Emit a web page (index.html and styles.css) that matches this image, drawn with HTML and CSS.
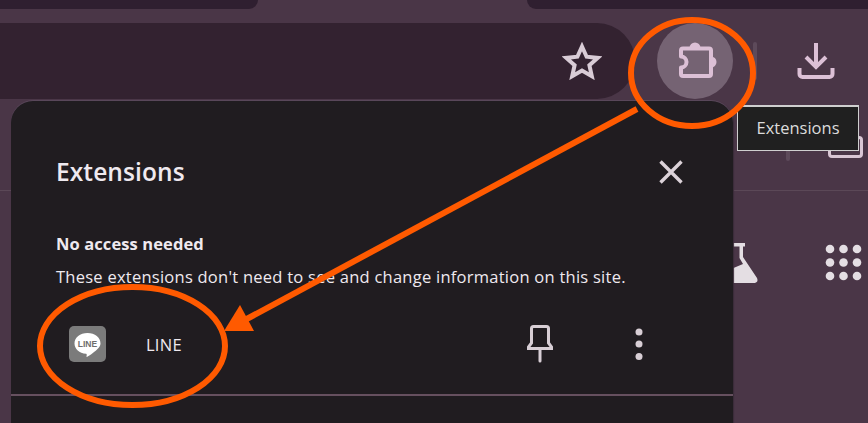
FILE: index.html
```html
<!DOCTYPE html>
<html lang="en">
<head>
<meta charset="utf-8">
<title>Extensions</title>
<link rel="stylesheet" href="styles.css">
</head>
<body>
<div class="browser">
  <div class="tabstrip">
    <div class="tab tab-left"></div>
    <div class="tab tab-right"></div>
  </div>
  <div class="toolbar">
    <div class="omnibox">
      <svg class="star" width="40" height="38" viewBox="0 0 40 38"><path d="M20 4.500l4.600 10.200 11.100 1.200-8.300 7.400 2.400 10.900L20 28.600l-9.800 5.600 2.400-10.900-8.300-7.400 11.100-1.200z" fill="none" stroke="#d9ccd6" stroke-width="4" stroke-linejoin="miter"/></svg>
    </div>
    <div class="ext-btn">
      <svg class="puzzle" width="44" height="42" viewBox="0 0 44 42">
        <path d="M10 8.500H36a2 2 0 0 1 2 2V34a2 2 0 0 1-2 2H10a2 2 0 0 1-2-2V27.500a5.500 5.500 0 0 0 0-11V10.500a2 2 0 0 1 2-2z" fill="none" stroke="#dcc0d6" stroke-width="4" stroke-linejoin="round"/>
        <path d="M16.500 8a5.500 5.500 0 0 1 11 0z" fill="#dcc0d6"/>
        <path d="M38 16.500a5.500 5.500 0 0 1 0 11z" fill="#dcc0d6"/>
      </svg>
    </div>
    <div class="sep"></div>
    <svg class="download" width="40" height="38" viewBox="0 0 40 38"><path d="M20 1v24M10 15l10 10 10-10M3.500 26v6a3 3 0 0 0 3 3h27a3 3 0 0 0 3-3v-6" fill="none" stroke="#dcc0d6" stroke-width="4" stroke-linejoin="miter"/></svg>
  </div>
  <div class="bookmarks">
    <div class="sep sep-low"></div>
    <div class="window-icon"></div>
  </div>
  <div class="content-row">
    <svg class="flask" width="50" height="42" viewBox="0 0 50 42"><path d="M13 0H35V3.500H33V14L47 35Q49 40 43 40H5Z" fill="#e4dee3"/><path d="M14 3.500H29.500V15L33 21L14 29Z" fill="#4a3647"/></svg>
    <svg class="grid" width="38" height="38" viewBox="0 0 38 38" fill="#e4dee3"><circle cx="5" cy="5" r="4.300"/><circle cx="18.500" cy="5" r="4.300"/><circle cx="32" cy="5" r="4.300"/><circle cx="5" cy="18.500" r="4.300"/><circle cx="18.500" cy="18.500" r="4.300"/><circle cx="32" cy="18.500" r="4.300"/><circle cx="5" cy="32" r="4.300"/><circle cx="18.500" cy="32" r="4.300"/><circle cx="32" cy="32" r="4.300"/></svg>
  </div>
</div>

<div class="panel">
  <div class="panel-head">
    <h1 class="panel-title">Extensions</h1>
    <svg class="close" width="24" height="24" viewBox="0 0 24 24"><path d="M1.500 1.500l21 21M22.500 1.500l-21 21" stroke="#dcd2d9" stroke-width="3.400" fill="none"/></svg>
  </div>
  <h2 class="section-title">No access needed</h2>
  <p class="section-text">These extensions don't need to see and change information on this site.</p>
  <div class="ext-row">
    <div class="line-logo">
      <svg width="37" height="36" viewBox="0 0 37 36"><path d="M18.500 7C11 7 5.500 11.500 5.500 17.500c0 5.500 4.800 9.700 11.500 10.300.6.100.8.500.7 1.100l-.2 2.100c1.800-.6 7.500-4.500 10.500-7.500 2.300-2 3.500-3.900 3.500-6C31.500 11.500 26 7 18.500 7z" fill="#fff"/><text class="line-logo-text" x="18.500" y="20.500" text-anchor="middle">LINE</text></svg>
    </div>
    <span class="ext-name">LINE</span>
    <svg class="pin" width="28" height="38" viewBox="0 0 28 38"><path d="M5.500 18V3.500a2 2 0 0 1 2-2h13a2 2 0 0 1 2 2V18l3 4v1.500H2.500V22z" fill="none" stroke="#d8ced5" stroke-width="3"/><path d="M14 24v12" stroke="#d8ced5" stroke-width="3" stroke-linecap="round"/></svg>
    <svg class="more" width="8" height="32" viewBox="0 0 8 32" fill="#d8ced5"><circle cx="4" cy="4" r="3.500"/><circle cx="4" cy="16" r="3.500"/><circle cx="4" cy="28.500" r="3.500"/></svg>
  </div>
  <div class="panel-divider"></div>
</div>

<div class="tooltip">Extensions</div>

<svg class="annotations" width="868" height="423" viewBox="0 0 868 423">
  <ellipse cx="692" cy="73" rx="61" ry="53" fill="none" stroke="#ff5a00" stroke-width="6"/>
  <ellipse cx="132.500" cy="346" rx="92.500" ry="59" fill="none" stroke="#ff5a00" stroke-width="6"/>
  <path d="M637 109L243 321" stroke="#ff5a00" stroke-width="6" fill="none"/>
  <path d="M224 331L240 305L254 331z" fill="#ff5a00"/>
</svg>
</body>
</html>
```
FILE: styles.css
```css
* { box-sizing: border-box; }
html, body { margin: 0; height: 100%; }
body {
  width: 868px;
  height: 423px;
  overflow: hidden;
  position: relative;
  background: #4a3647;
  font-family: "Open Sans", "Noto Sans", sans-serif;
  color: #efe9ef;
}

.browser { display: flex; flex-direction: column; height: 100%; }

.tabstrip { display: flex; justify-content: space-between; height: 23px; flex: none; }
.tab { height: 9px; background: #2f1f30; }
.tab-left { width: 258px; border-radius: 0 0 14px 0; }
.tab-right { width: 341px; border-radius: 0 0 0 14px; }

.toolbar { display: flex; align-items: center; height: 76px; flex: none; }
.omnibox {
  width: 635px;
  height: 76px;
  background: #332230;
  border-radius: 0 38px 38px 0;
  display: flex;
  align-items: center;
  justify-content: flex-end;
  padding-right: 33px;
}
.star { display: block; }
.ext-btn {
  width: 76px;
  height: 76px;
  margin-left: 22px;
  border-radius: 50%;
  background: #756373;
  display: flex;
  align-items: center;
  justify-content: center;
}
.puzzle { overflow: visible; }
.sep { width: 4px; height: 38px; margin-left: 20px; background: #5d4a5a; border-radius: 2px; }
.download { margin-left: 39px; }

.bookmarks {
  height: 92px;
  flex: none;
  border-bottom: 1px solid #5b4857;
  display: flex;
  justify-content: flex-end;
  padding: 37px 5px 0 0;
  gap: 38px;
}
.sep-low { height: 25px; margin: 0; }
.window-icon { width: 35px; height: 22px; border: 3px solid #d9c6d4; border-radius: 4px; }

.content-row {
  display: flex;
  justify-content: flex-end;
  align-items: flex-start;
  padding: 53px 5px 0 0;
  gap: 65px;
}
.flask { margin-top: -1px; }

.panel {
  position: absolute;
  left: 11px;
  top: 101px;
  width: 722px;
  height: 340px;
  background: #201c20;
  border-radius: 22px 22px 0 0;
  box-shadow: 0 -1px 0 #59475a, 1px 0 1px #3a2c39;
  padding: 0 45px;
}
.panel-head { display: flex; justify-content: space-between; align-items: center; height: 38px; margin-top: 52px; padding-right: 5px; }
.panel-title { margin: 0; font-size: 24.500px; line-height: 38px; font-weight: 600; color: #efe9ef; letter-spacing: 0.1px; }
.section-title { margin: 41px 0 0; font-size: 16.500px; line-height: 24px; font-weight: 700; color: #efe9ef; letter-spacing: 0.1px; }
.section-text { margin: 9px 0 0; font-size: 16.500px; line-height: 24px; color: #efe9ef; letter-spacing: 0.25px; white-space: nowrap; }

.ext-row { display: flex; align-items: center; height: 36px; margin: 37px 0 0 13px; }
.line-logo { width: 37px; height: 36px; background: #7b7b7b; border-radius: 5px; flex: none; }
.line-logo svg { display: block; }
.line-logo-text { font-family: "Liberation Sans", sans-serif; font-size: 8.500px; font-weight: 700; fill: #6e6e6e; }
.ext-name { margin-left: 40px; font-size: 16.500px; letter-spacing: 0.25px; color: #efe9ef; flex: 1; }
.pin { margin-right: 81px; }
.more { margin-right: 45px; }
.panel-divider { height: 2px; background: #66505f; margin: 32px -45px 0; }

.tooltip {
  position: absolute;
  left: 737px;
  top: 105px;
  width: 122px;
  height: 46px;
  background: #202020;
  border: 1px solid #cfcfcf;
  border-top-width: 2px;
  color: #dcdcdc;
  font-size: 16.500px;
  line-height: 41px;
  text-align: center;
}

.annotations { position: absolute; left: 0; top: 0; pointer-events: none; }
```
